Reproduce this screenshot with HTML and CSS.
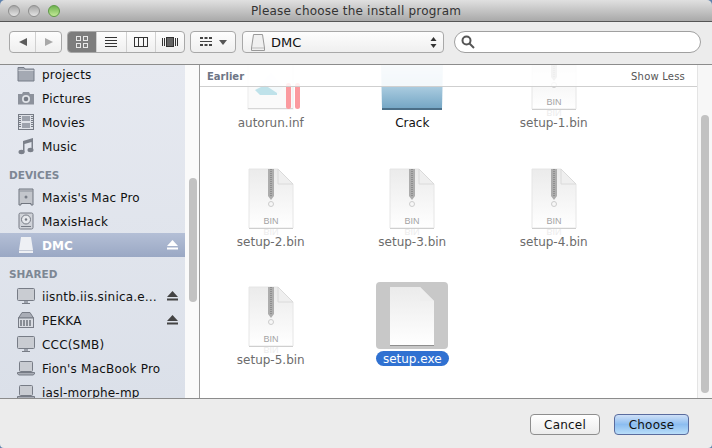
FILE: index.html
```html
<!DOCTYPE html>
<html lang="en">
<head>
    <meta charset="UTF-8">
    <meta name="viewport" content="width=device-width, initial-scale=1.0">
    <title>Please choose the install program</title>
    <link rel="stylesheet" href="styles.css">
</head>
<body>
    <svg class="defs" width="0" height="0">
        <defs>
            <linearGradient id="pageFill" x1="0" y1="0" x2="0" y2="1">
                <stop offset="0" stop-color="#ebebeb"/>
                <stop offset="1" stop-color="#ffffff"/>
            </linearGradient>
            <symbol id="binDoc" viewBox="0 0 48 72">
                <path d="M2 1H31L46 16V60H2Z" fill="url(#pageFill)" stroke="#e6e6e6"/>
                <path d="M2 60.5H46" stroke="#cfcfcf"/>
                <path d="M31 1L46 16H31Z" fill="#efefef" stroke="#dadada"/>
                <rect x="21" y="1" width="6" height="27" fill="#adadad"/>
                <path d="M24 1V28" stroke="#8f8f8f" stroke-width="2" stroke-dasharray="1 1"/>
                <path d="M21 28L24 32L27 28Z" fill="#adadad"/>
                <circle cx="24" cy="36" r="2.5" fill="none" stroke="#cccccc"/>
                <text x="24" y="56" text-anchor="middle" class="binText">BIN</text>
                <text x="24" y="-61" text-anchor="middle" class="binShadow" transform="scale(1,-1)">BIN</text>
            </symbol>
        </defs>
    </svg>

    <div class="titlebar">
        <span class="light"></span>
        <span class="light"></span>
        <span class="light green"></span>
        <div class="title">Please choose the install program</div>
    </div>

    <div class="toolbar">
        <div class="seg nav">
            <div class="cell">
                <svg width="10" height="10"><path d="M9 1V9L1 5Z" fill="#5c5c5c"/></svg>
            </div>
            <div class="cell">
                <svg width="10" height="10"><path d="M1 1V9L9 5Z" fill="#a8a8a8"/></svg>
            </div>
        </div>
        <div class="seg views">
            <div class="cell active">
                <svg width="12" height="12" fill="none" stroke="#e8e8e8"><rect x="0.5" y="0.5" width="4" height="4"/><rect x="7.5" y="0.5" width="4" height="4"/><rect x="0.5" y="7.5" width="4" height="4"/><rect x="7.5" y="7.5" width="4" height="4"/></svg>
            </div>
            <div class="cell">
                <svg width="12" height="12" stroke="#333"><path d="M0 1.5H12M0 4.5H12M0 7.5H12M0 10.5H12"/></svg>
            </div>
            <div class="cell">
                <svg width="14" height="12" fill="none" stroke="#333"><rect x="0.5" y="1.5" width="13" height="9"/><path d="M4.5 1.5V10.5M9.5 1.5V10.5"/></svg>
            </div>
            <div class="cell">
                <svg width="16" height="12" fill="none" stroke="#333"><path d="M0.5 2V10M2.5 2V10"/><rect x="4.5" y="1.5" width="7" height="9" fill="#666"/><path d="M13.5 2V10M15.5 2V10"/></svg>
            </div>
        </div>
        <div class="seg arrange">
            <svg width="12" height="12" fill="#444"><rect width="3" height="2" y="1"/><rect x="4.5" y="1" width="3" height="2"/><rect x="9" y="1" width="3" height="2"/><rect y="5" width="12" height="1"/><rect y="8" width="3" height="2"/><rect x="4.5" y="8" width="3" height="2"/><rect x="9" y="8" width="3" height="2"/></svg>
            <svg width="8" height="5"><path d="M0 0H8L4 5Z" fill="#555"/></svg>
        </div>
        <div class="seg popup">
            <svg width="14" height="17"><path d="M2.5 0.5H11.5L13.5 14V16.5H0.5V14Z" fill="#f0f0f0" stroke="#999"/><path d="M1 14H13" stroke="#bbb"/></svg>
            <span class="popup-name">DMC</span>
            <svg class="updown" width="7" height="11" fill="#333"><path d="M3.5 0L6.5 4H0.5Z"/><path d="M3.5 11L6.5 7H0.5Z"/></svg>
        </div>
        <div class="search">
            <svg width="14" height="14" fill="none" stroke="#555" stroke-width="2"><circle cx="5.5" cy="5.5" r="4"/><path d="M8.5 8.5L13 13"/></svg>
        </div>
    </div>

    <div class="content">
        <div class="sidebar">
            <div class="side-row">
                <svg class="side-icon" width="18" height="18"><path d="M1 2.5H7L8 4H17V16H1Z" fill="#a4a9b3" stroke="#777d88"/><path d="M1.5 5.5H16.5" stroke="#d0d3d9"/></svg>
                <span>projects</span>
            </div>
            <div class="side-row">
                <svg class="side-icon" width="18" height="18"><path d="M1 5H5L6 3H12L13 5H17V15.5H1Z" fill="#8d929c"/><circle cx="9" cy="10" r="4" fill="#dfe2e7"/><circle cx="9" cy="10" r="2.3" fill="#777c86"/></svg>
                <span>Pictures</span>
            </div>
            <div class="side-row">
                <svg class="side-icon" width="18" height="18"><rect x="1.5" y="1.5" width="15" height="15" fill="#dfe2e8" stroke="#777c86"/><rect x="5" y="3" width="8" height="5" fill="#9da2ac"/><rect x="5" y="10" width="8" height="5" fill="#9da2ac"/><path d="M3 3V15M15 3V15" stroke="#777c86" stroke-width="2" stroke-dasharray="1 1"/></svg>
                <span>Movies</span>
            </div>
            <div class="side-row">
                <svg class="side-icon" width="18" height="18" fill="#7b808a"><path d="M6 4L16 1V13H14.5V5L7.5 7V15.5H6Z"/><ellipse cx="4.5" cy="15" rx="3" ry="2.2"/><ellipse cx="13.5" cy="13" rx="3" ry="2.2"/></svg>
                <span>Music</span>
            </div>
            <div class="side-head">DEVICES</div>
            <div class="side-row">
                <svg class="side-icon" width="18" height="18"><path d="M2 1H16V17H14V15.5H4V17H2Z" fill="#c3c6cc" stroke="#6f747e"/><path d="M2.5 3H15.5" stroke="#8a8f99"/><circle cx="9" cy="9" r="1.5" fill="#777c86"/></svg>
                <span>Maxis's Mac Pro</span>
            </div>
            <div class="side-row">
                <svg class="side-icon" width="18" height="18"><rect x="2" y="1" width="14" height="16" rx="1.5" fill="#d0d3d9" stroke="#767b85"/><circle cx="9" cy="7.5" r="4.5" fill="#e6e8ec" stroke="#767b85"/><circle cx="9" cy="7.5" r="1.2" fill="#767b85"/><path d="M4 14.5H14" stroke="#767b85"/></svg>
                <span>MaxisHack</span>
            </div>
            <div class="side-row selected">
                <svg class="side-icon" width="18" height="18"><path d="M4 1H14L16 14V17H2V14Z" fill="#eef0f4"/><path d="M2 14.5H16" stroke="#c3c9d6"/></svg>
                <span>DMC</span>
                <svg class="eject" width="11" height="10" fill="#fff"><path d="M5.5 0L11 6H0Z"/><rect y="7.5" width="11" height="2"/></svg>
            </div>
            <div class="side-head">SHARED</div>
            <div class="side-row">
                <svg class="side-icon" width="18" height="18"><rect x="0.5" y="1.5" width="17" height="12" rx="1" fill="#c9ccd2" stroke="#777c86"/><path d="M7 14H11V16H7Z" fill="#9da2ac"/><path d="M5 16.5H13" stroke="#777c86"/></svg>
                <span>iisntb.iis.sinica.e…</span>
                <svg class="eject" width="11" height="10" fill="#444"><path d="M5.5 0L11 6H0Z"/><rect y="7.5" width="11" height="2"/></svg>
            </div>
            <div class="side-row">
                <svg class="side-icon" width="18" height="18"><path d="M5 1.5H13L16.5 7H1.5Z" fill="#a9adb6" stroke="#777c86"/><rect x="1.5" y="7" width="15" height="9.5" fill="#d9dce2" stroke="#777c86"/><path d="M4 9V15M7 9V15M10 9V15M13 9V15" stroke="#6f747e" stroke-width="1.5"/></svg>
                <span>PEKKA</span>
                <svg class="eject" width="11" height="10" fill="#444"><path d="M5.5 0L11 6H0Z"/><rect y="7.5" width="11" height="2"/></svg>
            </div>
            <div class="side-row">
                <svg class="side-icon" width="18" height="18"><rect x="0.5" y="1.5" width="17" height="12" rx="1" fill="#c9ccd2" stroke="#777c86"/><path d="M7 14H11V16H7Z" fill="#9da2ac"/><path d="M5 16.5H13" stroke="#777c86"/></svg>
                <span>CCC(SMB)</span>
            </div>
            <div class="side-row">
                <svg class="side-icon" width="18" height="18"><rect x="2.5" y="2.5" width="13" height="10" rx="1" fill="#c9ccd2" stroke="#777c86"/><path d="M0.5 13.5H17.5V15L16 16H2L0.5 15Z" fill="#a9adb6" stroke="#777c86"/></svg>
                <span>Fion's MacBook Pro</span>
            </div>
            <div class="side-row">
                <svg class="side-icon" width="18" height="18"><rect x="2.5" y="2.5" width="13" height="10" rx="1" fill="#c9ccd2" stroke="#777c86"/><path d="M0.5 13.5H17.5V15L16 16H2L0.5 15Z" fill="#a9adb6" stroke="#777c86"/></svg>
                <span>iasl-morphe-mp</span>
            </div>
        </div>
        <div class="side-track"><div class="side-thumb"></div></div>

        <div class="files">
            <div class="files-head">
                <span>Earlier</span>
                <span class="show-less">Show Less</span>
            </div>
            <div class="grid">
                <div class="item">
                    <div class="item-icon">
                        <svg width="60" height="66" viewBox="0 0 60 66">
                            <rect x="7" y="2" width="45" height="58" fill="#fafafa" stroke="#ececec"/>
                            <path d="M7 59.5H52" stroke="#d6d6d6"/>
                            <path d="M14 41L30 24L42 38L36 46H19Z" fill="#f4f9fb"/>
                            <path d="M14 41L24 36L36 44V46H19Z" fill="#bfe2ea"/>
                            <rect x="45" y="34" width="5" height="26" rx="2.5" fill="#fb9a9f"/>
                            <rect x="54" y="34" width="5" height="26" rx="2.5" fill="#fb9a9f"/>
                        </svg>
                    </div>
                    <div class="item-label dim">autorun.inf</div>
                </div>
                <div class="item">
                    <div class="item-icon">
                        <svg width="64" height="66" viewBox="0 0 64 66">
                            <defs>
                                <linearGradient id="folderFill" x1="0" y1="0" x2="0" y2="1">
                                    <stop offset="0" stop-color="#cfe2ee"/>
                                    <stop offset="0.5" stop-color="#a9cbdf"/>
                                    <stop offset="1" stop-color="#73a5c4"/>
                                </linearGradient>
                            </defs>
                            <path d="M1 16H63L62 60H2Z" fill="url(#folderFill)"/>
                            <path d="M2 59H62V61H2Z" fill="#4b6f88"/>
                        </svg>
                    </div>
                    <div class="item-label">Crack</div>
                </div>
                <div class="item">
                    <div class="item-icon"><svg width="48" height="72"><use href="#binDoc"/></svg></div>
                    <div class="item-label dim">setup-1.bin</div>
                </div>
                <div class="item">
                    <div class="item-icon"><svg width="48" height="72"><use href="#binDoc"/></svg></div>
                    <div class="item-label dim">setup-2.bin</div>
                </div>
                <div class="item">
                    <div class="item-icon"><svg width="48" height="72"><use href="#binDoc"/></svg></div>
                    <div class="item-label dim">setup-3.bin</div>
                </div>
                <div class="item">
                    <div class="item-icon"><svg width="48" height="72"><use href="#binDoc"/></svg></div>
                    <div class="item-label dim">setup-4.bin</div>
                </div>
                <div class="item">
                    <div class="item-icon"><svg width="48" height="72"><use href="#binDoc"/></svg></div>
                    <div class="item-label dim">setup-5.bin</div>
                </div>
                <div class="item">
                    <div class="item-icon picked">
                        <svg width="46" height="60"><path d="M1 1H31L45 15V59H1Z" fill="url(#pageFill)"/><path d="M1 59.5H45" stroke="#8f8f8f"/><path d="M31 1L45 15H31Z" fill="#eeeeee"/></svg>
                    </div>
                    <div class="item-label pill">setup.exe</div>
                </div>
            </div>
        </div>
        <div class="files-track"><div class="files-thumb"></div></div>
    </div>

    <div class="footer">
        <button type="button" class="btn">Cancel</button>
        <button type="button" class="btn primary">Choose</button>
    </div>
</body>
</html>
```

FILE: styles.css
```css
html, body {
    margin: 0;
    height: 448px;
    overflow: hidden;
}
body {
    font-family: "DejaVu Sans", sans-serif;
    font-size: 12px;
    color: #111;
    background-color: #5f82ad;
}
.defs {
    position: absolute;
}
.binText {
    font: 9px "Liberation Sans", sans-serif;
    fill: #a3a3a3;
}
.binShadow {
    font: 9px "Liberation Sans", sans-serif;
    fill: #ececec;
}

/* title bar */
.titlebar {
    height: 22px;
    box-sizing: border-box;
    display: flex;
    align-items: center;
    gap: 8px;
    padding: 1px 0 0 8px;
    background: linear-gradient(#e0e0e0, #a9a9a9);
    border-bottom: 1px solid #555;
    border-radius: 5px 5px 0 0;
    position: relative;
}
.light {
    width: 12px;
    height: 12px;
    border-radius: 50%;
    border: 1px solid #8f8f8f;
    box-sizing: border-box;
    background: linear-gradient(#a6a6a6, #e4e4e4);
}
.light.green {
    border-color: #5d9a44;
    background: linear-gradient(#6fb34f, #c3ea97);
}
.title {
    position: absolute;
    left: 0;
    right: 0;
    text-align: center;
    letter-spacing: 0.2px;
    color: #333;
}

/* tool bar */
.toolbar {
    height: 43px;
    box-sizing: border-box;
    display: flex;
    align-items: center;
    padding: 0 11px 2px 9px;
    background-color: #ececec;
    border-bottom: 1px solid #8c8c8c;
}
.seg {
    height: 22px;
    box-sizing: border-box;
    display: flex;
    align-items: center;
    border: 1px solid #a8a8a8;
    border-radius: 4px;
    background: linear-gradient(#fdfdfd, #efefef);
    margin-right: 5px;
}
.cell {
    height: 100%;
    display: flex;
    align-items: center;
    justify-content: center;
    border-left: 1px solid #d0d0d0;
}
.cell:first-child {
    border-left: none;
}
.nav {
    width: 53px;
}
.nav .cell {
    flex: 1;
}
.views {
    width: 118px;
}
.views .cell {
    flex: 1;
}
.cell.active {
    background-color: #7d7d7d;
    border-radius: 3px 0 0 3px;
}
.arrange {
    width: 46px;
    justify-content: center;
    gap: 7px;
    margin-right: 6px;
}
.popup {
    width: 202px;
    padding: 0 6px 0 8px;
    gap: 6px;
    margin-right: 10px;
}
.popup-name {
    flex: 1;
    font-size: 13px;
}
.search {
    flex: 1;
    height: 22px;
    box-sizing: border-box;
    display: flex;
    align-items: center;
    padding-left: 6px;
    background-color: #fff;
    border: 1px solid #a0a0a0;
    border-radius: 11px;
}

/* sidebar and file area */
.content {
    height: 334px;
    display: flex;
    background-color: #fff;
    border-bottom: 1px solid #8c8c8c;
    box-sizing: border-box;
}
.sidebar {
    width: 185px;
    flex: none;
    overflow: hidden;
    background: linear-gradient(#e6e9f0, #dbe0e9);
    box-sizing: border-box;
}
.side-row {
    height: 24px;
    display: flex;
    align-items: center;
    gap: 7px;
    padding: 0 7px 0 17px;
    font-size: 12px;
    letter-spacing: 0.2px;
}
.side-row span {
    padding-top: 2px;
    white-space: nowrap;
}
.side-row:first-child {
    margin-top: -3px;
}
.side-icon {
    flex: none;
}
.eject {
    margin-left: auto;
    flex: none;
}
.selected {
    color: #fff;
    font-weight: bold;
    letter-spacing: 0;
    background: linear-gradient(#b4bfd6, #9aa8c4);
}
.side-head {
    height: 27px;
    box-sizing: border-box;
    padding: 11px 0 0 9px;
    font-size: 10.5px;
    font-weight: bold;
    color: #7d8794;
}
.side-track {
    width: 15px;
    flex: none;
    background-color: #fafafa;
    border-right: 1px solid #9a9a9a;
    box-sizing: border-box;
    padding: 113px 0 0 4px;
}
.side-thumb {
    width: 8px;
    height: 124px;
    border-radius: 4px;
    background-color: #c2c2c2;
}
.files {
    flex: 1;
    position: relative;
    overflow: hidden;
}
.files-head {
    position: absolute;
    top: 0;
    left: 0;
    right: 0;
    height: 22px;
    box-sizing: border-box;
    display: flex;
    align-items: center;
    justify-content: space-between;
    padding: 1px 12px 0 7px;
    font-size: 10px;
    font-weight: bold;
    color: #6d7585;
    background-color: rgba(255, 255, 255, 0.85);
    border-bottom: 1px solid #cfcfcf;
    z-index: 1;
}
.show-less {
    font-weight: normal;
    letter-spacing: 0.2px;
    color: #555;
}
.grid {
    display: grid;
    grid-template-columns: repeat(3, 141.5px);
    grid-auto-rows: 118.5px;
    margin: -20px 0 0 0;
}
.item {
    display: flex;
    flex-direction: column;
    align-items: center;
    gap: 2px;
}
.item-icon {
    width: 72px;
    height: 67px;
    flex: none;
    display: flex;
    align-items: flex-start;
    justify-content: center;
    padding-top: 4px;
    box-sizing: border-box;
    overflow: visible;
    border-radius: 4px;
}
.item-icon.picked {
    background-color: #c8c8c8;
}
.item-label {
    height: 15px;
    line-height: 18px;
    padding: 0 4px;
    font-size: 12px;
    white-space: nowrap;
}
.dim {
    color: #6c6c6c;
}
.pill {
    width: 73px;
    line-height: 17px;
    box-sizing: border-box;
    text-align: center;
    color: #fff;
    background-color: #3071d1;
    border-radius: 8px;
}
.files-track {
    width: 15px;
    flex: none;
    background-color: #f7f7f7;
    border-left: 1px solid #e4e4e4;
    box-sizing: border-box;
    padding: 50px 0 0 3px;
}
.files-thumb {
    width: 8px;
    height: 278px;
    border-radius: 4px;
    background-color: #c2c2c2;
}

/* buttons */
.footer {
    height: 49px;
    box-sizing: border-box;
    display: flex;
    justify-content: flex-end;
    align-items: flex-start;
    gap: 14px;
    padding: 15px 23px 0 0;
    background-color: #ececec;
    border-radius: 0 0 4px 4px;
}
.btn {
    height: 21px;
    width: 70px;
    padding: 0;
    font: 12px "DejaVu Sans", sans-serif;
    letter-spacing: 0.2px;
    color: #111;
    border: 1px solid #8e8e8e;
    border-radius: 4px;
    background: linear-gradient(#ffffff, #ececec);
}
.primary {
    width: 75px;
    border-color: #5a6c9e;
    background: linear-gradient(#cfe0f7, #8cbdf0 50%, #b9def9);
}
```
